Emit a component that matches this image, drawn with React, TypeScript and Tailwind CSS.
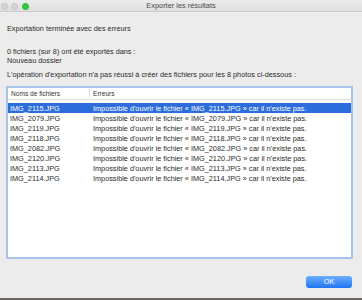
import React from 'react';

const FILES = [
  'IMG_2115.JPG',
  'IMG_2079.JPG',
  'IMG_2119.JPG',
  'IMG_2118.JPG',
  'IMG_2082.JPG',
  'IMG_2120.JPG',
  'IMG_2113.JPG',
  'IMG_2114.JPG',
];

const App: React.FC = () => {
  return (
    <div
      className="w-[362px] h-[300px] flex flex-col bg-[#ececec] text-[#2b2b2b] overflow-hidden"
      style={{ fontFamily: '"Liberation Sans", Arial, sans-serif' }}
    >
      {/* title bar */}
      <div className="relative h-[12px] shrink-0 flex items-center justify-center bg-gradient-to-b from-[#ececec] to-[#dedede] border-b border-[#cacaca]">
        <div className="absolute left-[1px] top-[2.5px] flex gap-[3px]">
          <span className="w-[7px] h-[7px] rounded-full bg-[#d3d3d3] border border-[#c4c4c4]" />
          <span className="w-[7px] h-[7px] rounded-full bg-[#d3d3d3] border border-[#c4c4c4]" />
          <span className="ml-[1px] w-[7px] h-[7px] rounded-full bg-[#2fc93d] border border-[#27b533]" />
        </div>
        <span className="text-[7.4px] leading-none text-[#4a4a4a]">Exporter les résultats</span>
      </div>

      <div className="flex-1 flex flex-col px-[6px] text-[7.3px] leading-[9px]">
        <div className="pl-[1px] pt-[12px]">Exportation terminée avec des erreurs</div>
        <div className="pl-[1px] mt-[14px]">0 fichiers (sur 8) ont été exportés dans :</div>
        <div className="pl-[1px]">Nouveau dossier</div>
        <div className="pl-[1px] mt-[5px]">L'opération d'exportation n'a pas réussi à créer des fichiers pour les 8 photos ci-dessous :</div>

        {/* table */}
        <div className="mt-[7px] h-[173px] w-[347px] bg-white border-2 border-[#a7c3ea] flex flex-col">
          <div className="flex h-[12px] items-center border-b border-[#e0e0e0] text-[6.6px] text-[#333]">
            <div className="w-[82px] pl-[3px] border-r border-[#e0e0e0] h-[9px] flex items-center">Noms de fichiers</div>
            <div className="pl-[3px]">Erreurs</div>
          </div>
          <div className="mt-[3px] flex flex-col">
            {FILES.map((f, i) => (
              <div
                key={f}
                className={
                  'flex h-[10px] items-center ' +
                  (i === 0 ? 'bg-[#2a6ddb] text-white' : 'text-[#2b2b2b]')
                }
              >
                <div className="w-[82px] pl-[2px]">{f}</div>
                <div className="pl-[3px]">
                  Impossible d'ouvrir le fichier « {f} » car il n'existe pas.
                </div>
              </div>
            ))}
          </div>
        </div>

        <div className="flex justify-end mt-[17px] pr-[4px]">
          <button className="w-[46px] h-[12px] rounded-[3px] bg-gradient-to-b from-[#6aaefb] to-[#1f74f3] text-white text-[7.3px] leading-none">
            OK
          </button>
        </div>
      </div>
      <div className="h-[2px] shrink-0 bg-[#6b6560]" />
    </div>
  );
};

export default App;
